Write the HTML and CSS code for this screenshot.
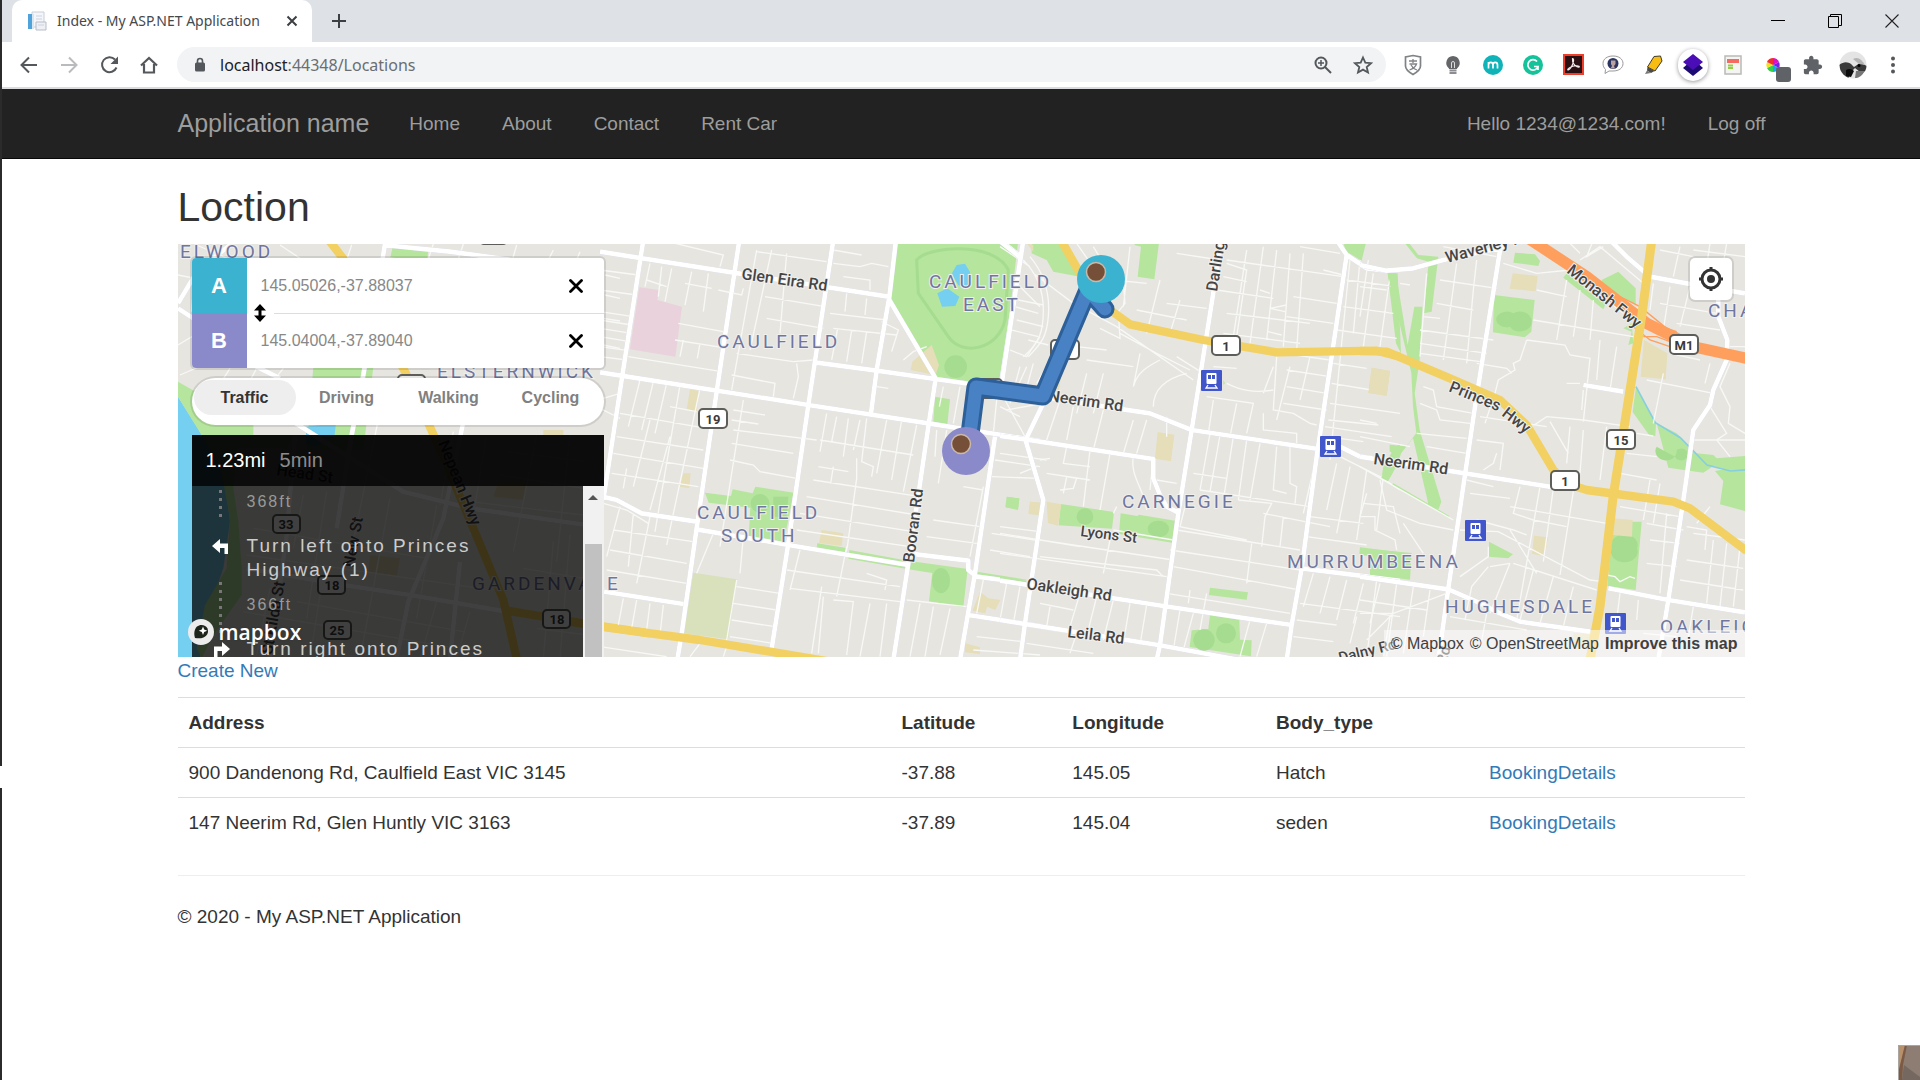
FILE: index.html
```html
<!DOCTYPE html>
<html lang="en">
<head>
<meta charset="utf-8">
<title>Index - My ASP.NET Application</title>
<link rel="stylesheet" href="styles.css">
</head>
<body>
<div class="window">
<header class="chrome">
  <div class="tabstrip">
    <div class="tab">
      <svg class="favicon" viewBox="0 0 20 20"><path d="M5 1h12v15H5z" fill="#f4f6fa" stroke="#c9ced8"/><path d="M1 3h4v15H1z" fill="#4fa3da"/><path d="M5 3h2v15H5z" fill="#d8e6f2"/><path d="M9 11h10v8H9z" fill="#eef0f4" stroke="#b7bec9"/><path d="M9 5h6M9 8h6M11 14h6" stroke="#ccd3df"/></svg>
      <span class="tab-title">Index - My ASP.NET Application</span>
      <button class="icon-btn tab-close" aria-label="Close tab"><svg width="12" height="12" viewBox="0 0 12 12"><path d="M1.500 1.500l9 9M10.500 1.500l-9 9" stroke="#3c4043" stroke-width="2"/></svg></button>
    </div>
    <button class="icon-btn new-tab" aria-label="New tab"><svg width="16" height="16" viewBox="0 0 16 16"><path d="M8 1v14M1 8h14" stroke="#3c4043" stroke-width="2"/></svg></button>
    <div class="window-buttons">
      <button class="icon-btn" aria-label="Minimise"><svg width="14" height="14" viewBox="0 0 14 14"><path d="M0 6.500h14" stroke="#000"/></svg></button>
      <button class="icon-btn" aria-label="Restore"><svg width="14" height="14" viewBox="0 0 14 14" fill="none" stroke="#000"><path d="M.5 2.500h10v11H.5zM2.500 2.500v-2h11v11h-3"/></svg></button>
      <button class="icon-btn" aria-label="Close"><svg width="14" height="14" viewBox="0 0 14 14"><path d="M.5 .5l13 13M13.500 .5l-13 13" stroke="#222" stroke-width="1.100"/></svg></button>
    </div>
  </div>
  <div class="toolbar">
    <button class="icon-btn" aria-label="Back"><svg width="18" height="18" viewBox="0 0 18 18" fill="none" stroke="#54585c" stroke-width="2"><path d="M17 9H2M9 1.500L1.500 9 9 16.500"/></svg></button>
    <button class="icon-btn" aria-label="Forward"><svg width="18" height="18" viewBox="0 0 18 18" fill="none" stroke="#b9bbbd" stroke-width="2"><path d="M1 9h15M9 1.500L16.500 9 9 16.500"/></svg></button>
    <button class="icon-btn" aria-label="Reload"><svg width="20" height="20" viewBox="0 0 20 20"><path d="M17.500 12.500A7.500 7.500 0 1 1 16 4.500" fill="none" stroke="#54585c" stroke-width="2"/><path d="M19 1.500V9h-7.500z" fill="#54585c"/></svg></button>
    <button class="icon-btn" aria-label="Home"><svg width="18" height="18" viewBox="0 0 18 18"><path d="M4 8v8.500h10V8M1 9.500L9 2l8 7.500" fill="none" stroke="#54585c" stroke-width="2.200"/></svg></button>
    <div class="omnibox">
      <svg width="12" height="16" viewBox="0 0 12 16"><rect x="1" y="5.500" width="10" height="9" rx="1.500" fill="#54585c"/><path d="M3.500 6V4a2.500 2.500 0 0 1 5 0v2" fill="none" stroke="#54585c" stroke-width="1.600"/></svg>
      <span class="url"><span class="host">localhost</span>:44348/Locations</span>
      <button class="icon-btn" aria-label="Zoom"><svg width="18" height="18" viewBox="0 0 18 18" fill="none" stroke="#54585c" stroke-width="2"><circle cx="7" cy="7" r="5.500"/><path d="M11 11l6 6"/><path d="M7 4v6M4 7h6" stroke-width="1.500"/></svg></button>
      <button class="icon-btn" aria-label="Bookmark"><svg width="20" height="20" viewBox="0 0 20 20"><path d="M10 2.500l2.300 5.200 5.700.5-4.300 3.800 1.300 5.500-5-2.900-5 2.900L6.300 12 2 8.200l5.700-.5z" fill="none" stroke="#54585c" stroke-width="1.800"/></svg></button>
    </div>
    <div class="extensions">
      <button class="icon-btn" aria-label="Shield"><svg width="20" height="22" viewBox="0 0 20 22"><path d="M10 1.500l7.500 1.500v9c0 4-4 6.500-7.500 8.500-3.500-2-7.500-4.500-7.500-8.500V3z" fill="#fff" stroke="#808386" stroke-width="1.700"/><path d="M10 5v4M6 7h8M6.500 10h7c-1 3-4 5-7 6M8 11c1 2 3 4 6 5" fill="none" stroke="#808386" stroke-width="1.300"/></svg></button>
      <button class="icon-btn" aria-label="Lamp"><svg width="16" height="20" viewBox="0 0 16 20"><path d="M8 1a7 7 0 0 1 4 12.500V14H4v-.5A7 7 0 0 1 8 1z" fill="#636568"/><path d="M6.500 13V8a1.500 1.500 0 0 1 3 0v5" fill="none" stroke="#ddd"/><path d="M4.500 15.500h7M4.500 18h7" stroke="#8b8d90" stroke-width="1.800"/></svg></button>
      <button class="icon-btn" aria-label="M"><svg width="20" height="20" viewBox="0 0 20 20"><circle cx="10" cy="10" r="10" fill="#10b3b7"/><path d="M5.500 13.500V7M5.500 10c0-3.500 4.500-3.500 4.500 0v3.500M10 10c0-3.500 4.500-3.500 4.500 0v3.500" fill="none" stroke="#fff" stroke-width="1.700"/></svg></button>
      <button class="icon-btn" aria-label="Grammar"><svg width="20" height="20" viewBox="0 0 20 20"><circle cx="10" cy="10" r="10" fill="#15c39a"/><path d="M14 6.500A5.200 5.200 0 1 0 15 11.500h-4M15 11v4" fill="none" stroke="#fff" stroke-width="1.700"/></svg></button>
      <button class="icon-btn" aria-label="PDF"><svg width="21" height="21" viewBox="0 0 21 21"><path d="M1 1h19v19H1z" fill="#2a1012" stroke="#ee3f2c" stroke-width="2"/><path d="M9.500 4.500c2 0 1 5-1.500 9-2 3-4 3-3 1.500s5-3.500 9-3.200 2 2 0 1-5-4-4.500-8.300z" fill="none" stroke="#f2e8e8" stroke-width="1.200"/></svg></button>
      <button class="icon-btn" aria-label="Chat"><svg width="22" height="20" viewBox="0 0 22 20"><path d="M11 1c6 0 10 3 10 7.500S17 16 11 16H7l-4 2.500.5-4C2 13 1 11 1 8.500 1 4 5 1 11 1z" fill="#fff" stroke="#999"/><circle cx="11" cy="8.500" r="5.500" fill="#2c3460"/><path d="M9 5.500h4.500V9L12 11l1 2.500H8.500L10 11 9 9z" fill="#b9a29f"/></svg></button>
      <button class="icon-btn" aria-label="Highlighter"><svg width="20" height="20" viewBox="0 0 20 20"><path d="M11 1.500L17.500 1l1.500 5-7 10-7.500-4z" fill="#f8bd12" stroke="#3f3a2c"/><path d="M4.500 12l7 4-3.500 2-4-2.500z" fill="#4c4a46"/><path d="M4 15.500l4 2.500-6 1z" fill="#777"/></svg></button>
      <button class="icon-btn active-ext" aria-label="Layers"><svg width="22" height="24" viewBox="0 0 22 24"><path d="M11 6l10 9-10 8L1 15z" fill="#1d0b73"/><path d="M11 1l10 8-10 8L1 9z" fill="#4b0db5"/></svg></button>
      <button class="icon-btn" aria-label="Notes"><svg width="18" height="20" viewBox="0 0 18 20"><path d="M1 1h16v18H1z" fill="#f4f4f2" stroke="#b9b9b7" stroke-width="1.500"/><path d="M3 4h12v4H3z" fill="#f56a63"/><path d="M4 10.500h5M4 13h5" stroke="#94cf3f" stroke-width="2"/></svg></button>
      <button class="icon-btn" aria-label="Colours"><svg width="36" height="36" viewBox="0 0 36 36"><path d="M18 18V11a7 7 0 0 1 6 4z" fill="#e010c0"/><path d="M18 18l6-3a7 7 0 0 1 0 6z" fill="#7a1ee8"/><path d="M18 18l6 3a7 7 0 0 1-6 4z" fill="#18a9f5"/><path d="M18 18v7a7 7 0 0 1-6-4z" fill="#35d04a"/><path d="M18 18l-6 3a7 7 0 0 1 0-6z" fill="#f4e020"/><path d="M18 18l-6-3a7 7 0 0 1 6-4z" fill="#f03030"/><rect x="21" y="20" width="15" height="15" rx="3" fill="#5f6368"/></svg></button>
      <button class="icon-btn" aria-label="Extensions"><svg width="20" height="20" viewBox="1 0 23 23"><path d="M20.500 11H19V7c0-1.100-.9-2-2-2h-4V3.500C13 2.120 11.880 1 10.500 1S8 2.120 8 3.500V5H4c-1.100 0-1.990.9-1.990 2v3.800H3.500c1.490 0 2.700 1.210 2.700 2.700s-1.210 2.700-2.700 2.700H2V20c0 1.100.9 2 2 2h3.800v-1.500c0-1.490 1.210-2.700 2.700-2.700 1.490 0 2.700 1.210 2.700 2.700V22H17c1.100 0 2-.9 2-2v-4h1.500c1.380 0 2.500-1.120 2.500-2.500S21.880 11 20.500 11z" fill="#5f6368"/></svg></button>
      <button class="icon-btn" aria-label="Profile"><svg width="28" height="28" viewBox="0 0 28 28"><defs><clipPath id="round"><circle cx="14" cy="14" r="13.500"/></clipPath></defs><g clip-path="url(#round)"><path d="M0 0h28v28H0z" fill="#e4e4e4"/><path d="M0 14c5-4 9-3 12-1l3 3 6-4 7 3v5l-7 1-5-4-4 4-3 7-7-3z" fill="#3a3a3a"/><path d="M7 19c3-2 6-1 8 1l-3 6-5-1z" fill="#0c0c0c"/><path d="M14 8c5-3 9 1 12 6l-6-1z" fill="#b4b4b4"/><path d="M17 20l9 0-5 7-5 0z" fill="#777"/><circle cx="20" cy="14.500" r="1.500" fill="#000"/></g></svg></button>
      <button class="icon-btn" aria-label="Menu"><svg width="4" height="18" viewBox="0 0 4 18" fill="#54585c"><circle cx="2" cy="2.500" r="2"/><circle cx="2" cy="9" r="2"/><circle cx="2" cy="15.500" r="2"/></svg></button>
    </div>
  </div>
</header>

<nav class="navbar">
  <div class="container navbar-inner">
    <a class="brand" href="#">Application name</a>
    <a class="nav-link" href="#">Home</a>
    <a class="nav-link" href="#">About</a>
    <a class="nav-link" href="#">Contact</a>
    <a class="nav-link" href="#">Rent Car</a>
    <a class="nav-link nav-right" href="#">Hello 1234@1234.com!</a>
    <a class="nav-link" href="#">Log off</a>
  </div>
</nav>

<main class="container">
  <h2>Loction</h2>
  <section class="map" aria-label="Map">
    <svg class="map-canvas" viewBox="178 244 1567 413" preserveAspectRatio="xMidYMid slice">
      <rect x="178" y="244" width="1567" height="413" fill="#e6e5e0"/>

      <!-- Elwood, Gardenvale -->
      <g transform="translate(170 235) scale(.33333)">
        <path fill="#75cff0" d="M0 480L24 485 90 590 160 700 180 860 160 1000 100 1170 90 1270H0z"/>
        <path fill="#b6e59e" d="M24 440L130 500 250 570 250 600H370L350 640 200 640 190 760 205 860 215 1000 215 1080 130 1200 95 1270 80 1240 105 1110 170 1000 180 850 150 690 24 485zM670 27l105 15-4 40-110-15zM430 395h180l-30 250H410z"/>
        <path fill="#75cff0" d="M408 575l90-10-5 40-60 30-25-10z"/>
        <path fill="#e3dcb5" d="M985 740h90l-15 55-90-10zM600 960l90 10-10 55-85-10zM1120 585h60v20h-60z"/>
        <g class="minor"><path d="M24 120l50 10-10 100M80 30l250 110M330 30l90 60M545 30l-20 60M790 27l-20 60M880 27l-20 60M1040 30l-20 70M1150 45l-30 60M1230 50l-20 50M24 330l100-60M30 420l140-60M180 400l-70 110M260 400l-60 110M340 400l-80 100M1305 120l45 10M1305 180l45 10M1300 250l50 8M1300 330l50 10M1300 490l50 -15M1290 520l60 30M640 480l-90 440M850 590l-40 220M950 600l-50 300M1100 600l-70 350M1200 600l-40 380M1010 650l240 30M990 720l250 40M900 800l340 40M400 780l-30 160M470 770l-60 380M660 790l-80 430M800 810l-60 340M250 880l520 90M230 960l700 100M220 1130l640 110M380 1100l500 90M300 1060l-40 200M450 1080l-30 190M600 1110l-30 160M800 1100l-50 170M900 1130l-40 140M1060 1000l180 30M1100 1180l150 20M1150 920l-30 350M1200 900l-30 370"/></g>
        <g class="major"><path d="M645 27L580 420 545 600 500 880M375 600L350 900 300 1270M880 560L820 850 715 1100 680 1270M24 220L70 250 130 330 330 430M24 205l60-100 100-78M370 560L700 770 900 820 1250 870M230 1000L520 1050 720 1080 1010 1130M640 30l200 20 450 60M870 980l-30 290"/></g>
        <path class="yellow" d="M480 20l70 90 160 310 110 245 180 430 40 175M1000 1125l240 40 200 30"/>
      </g>

      <!-- Caulfield -->
      <g transform="translate(600 240) scale(.33333)">
        <path fill="#b6e59e" d="M893 0H1255L1205 420 1115 425 1007 410 870 170zM1005 470l45 8-8 75-42-8zM315 758l78 10 5-20 60 12 8-20 115 18-30 150-105-15 5-90-125-15zM652 910l92 15-2 14-92-14zM748 930l175 32 180 25-13 115-103-18 10-85-62-10-190-33zM1220 770l38 6-4 32-38-6zM1130 995l150 24-5 6-150-20z"/>
        <path fill="none" stroke="#a6dc8f" stroke-width="9" d="M950 60C980 20 1180 0 1225 90l-10 150c-20 90-130 110-170 50l-90-130z"/>
        <circle cx="1067" cy="380" r="34" fill="#a6dc8f"/><circle cx="480" cy="790" r="28" fill="#a6dc8f"/><ellipse cx="1023" cy="1022" rx="27" ry="38" fill="#a6dc8f"/><path d="M520 770h45l-5 60h-40z" fill="#a6dc8f"/>
        <path fill="#75cff0" d="M1070 75l25-4 15 25-5 45-30-5-20-35zM1012 160l30-15 36 25-12 28-40 2z"/>
        <path fill="#e9d2dc" d="M118 142l58 8-4 30 74 20-20 150-136-22z"/>
        <path fill="#d8e0bc" d="M280 998l130 20-26 180-132-18z"/>
        <path fill="#e5deb8" d="M270 448l28 5-8 62-30-5zM665 870l65 10-5 38-68-9zM250 700l22 0-4 45-28-5zM995 315l22 60-10 30-75-15 5-25zM1140 1055l25 20 36 5-15 30-25-10-5 20-38-8zM1290 785l30 3v38l-34-4zM1095 1210l45 12v20l-45-5z"/>
        <g class="minor"><path d="M0 90l115 15M0 150l110 15M0 215l100 15M0 240l95 15M0 265l95 15M0 290l90 15M0 320l85 12M0 350l80 10M150 70l-15 70M185 80l-10 90M215 85l-20 100M275 95l-20 100M325 100l-15 115M140 120l60 20M255 130l80 15M355 150l70 15 5-20M225 10l145 35-10 35M470 30l-75 420M515 30l-65 300M560 40l-20 240M470 35l210 30M495 170l180 30M500 235l170 30M235 250l135 25M225 300l140 22M85 350l280 45M250 300l-10 50M300 310l-8 45M410 340l170 25 60-5M590 370l5 40-15 65M395 405l130 25-5 40M700 30l85 15M700 70l80 10 35-10 50 10M730 110l80 10v30M740 160l-5 55M690 220l170 20M800 175l-5 50M700 265l190 20M713 265l-18 95M755 270l-15 95M800 275l-15 95M845 245l50 25-20 65M910 360l30-25 40-15M120 420l-35 140M160 425l-35 145M200 430l-35 150M240 435l-75 440M300 445l-100 470M430 480l-70 440M210 500l80 15M400 510l95 15M395 540l80 12M400 570l250 30M60 520l260 45M50 590l260 40M40 640l270 45M35 700l260 40M395 610l185 30M390 660l70 15 20 20 110 20M80 685l-10 60M150 540l-50 200M210 590l-60 220M680 520l-20 115M710 530l-15 75M745 535l-15 115M780 540l-20 90M800 535l-15 130 35 15-5 30M860 540l-30 160M660 600l280 45M655 680l90 15M700 680l-8 50M770 655l0 60-30 220M640 720l320 50M620 770l330 55M600 820l340 55M590 870l340 50M905 540l-30 180M950 555l-40 200M830 440l35 5M1080 440l-20 110M1030 440l-12 60M1010 570l-5 80M1040 570l-25 160M1090 740l60 10M1000 840l140 20M980 890l150 20M1090 640l-20 60M1150 740l-40 210M1185 660l135 20M1175 710l140 5M1175 880l130 20M1170 930l120 20M1195 430l-15 150M1215 480l60 110M1250 130l70 70M1245 200l70 20M1235 270l80 20M1230 330l50 20 40-60M1280 380l-45 100M10 790l70 20 65 40M60 800l-40 150M100 820l-15 160M150 830l-40 200M40 870l240 35M30 930l230 40M20 990l240 40M340 880l-50 120M430 890l-10 110M410 1020l-30 180M410 1040l130 20M400 1090l130 20M395 1140l130 20M390 1190l130 20M560 990l340 50M570 1045l330 40M665 1040l-30 200M670 1070l-15 170M740 920l-30 150M600 930l-30 120M700 1080l60 5-20 160M810 1090l-30 160M860 1090l-20 160M800 1000l60 20-5 30M920 1080l180 20M960 1090l-30 160M1000 1100l-25 150M1050 1105l-30 140M1150 1020l-20 100M1220 1030l-20 110M1260 1040l-20 110M70 1075l-15 80M110 1080l-15 85M190 1095l-10 90M150 1090l-10 80M0 1220l200 30M300 1210l-30 40M380 1220l-10 30M1130 1190l140 15M1120 1230l200 15"/></g>
        <g class="major">
          <path d="M130 0L68 400 10 780M418 0L350 455 292 850 245 1180 232 1260M700 0L625 495 565 910 515 1225M888 0L868 170 830 390 813 520M868 180L1007 415 985 560 925 970 880 1260M1200 0L1262 50M1270 0L1205 420M1185 590L1125 1000 1080 1260M0 35L400 98 865 170M650 368L830 392 1110 432M0 397L250 436 625 495 985 550 1320 603M10 770L50 780 125 820 290 845M290 868L565 915 925 975M925 940L1105 962V990L1130 1010 1320 1035M0 1053L250 1092M1105 1125L1320 1158"/>
        </g>
        <path class="yellow" d="M-120 1140L0 1160 300 1200 690 1265"/>
      </g>

      <!-- Carnegie -->
      <g transform="translate(1000 240) scale(.33333)">
        <path fill="#b6e59e" d="M95 0H180L240 110 160 95 140 60 95 40zM410 0h68l-15 118-50-8 10-90-20-5zM1030 0h70l-15 62-50-30zM1163 100h30l10 240-15-30zM22 770l36 5-4 35-36-8zM182 792l160 24-6 50-160-10zM362 820l50 8 5-4 108 18-8 66-160-26zM630 1043l114 14-4 22-113-14zM630 1125l88 14 2 60 35 2-2 48-184-28 6-50 50-4zM1080 922l120 15v75l-90-15 2-50-34-6zM1150 680l30-50 20-20v40l-28 60-26-6zM670 420l5 10-5 5zM0 1008l80 14v6l-80-12z"/>
        <circle cx="255" cy="830" r="25" fill="#a6dc8f"/><ellipse cx="475" cy="867" rx="32" ry="25" fill="#a6dc8f"/><circle cx="612" cy="1200" r="32" fill="#a6dc8f"/><circle cx="678" cy="1180" r="30" fill="#a6dc8f"/>
        <path fill="#e5deb8" d="M473 576l50 8-10 80-48-8zM90 785l38 3-5 38-38-6zM140 785l44 8-10 64-30-8zM1115 383l55 10-10 74-55-8zM150 440l35-40-10 60zM80 10l20 5v20z"/>
        <g class="minor"><path d="M0 20l90 60M70 60c40 40 60 90 60 150s-10 100-60 140M90 50c50 60 60 120 55 180s-20 80-60 120M55 180l75 15M50 240l80 20M85 300l60 15M100 100l120 90 130 70 230 160M230 10l90 130M280 20l60 100 30 10 5 60-20 25 5 80-60-30M340 120l100 10M390 20l-20 180M530 40l130 20M680 70l60 20-30 200M740 30l-40 260M790 20l-40 290M830 30l-30 270M870 40l-20 280M910 40l-20 290M680 60l350 50M670 110l70 15M500 190l120 15M480 120l-40 160M410 210l150 30M540 180l-30 100M650 150l170 25M780 150l30 10M860 195l-50 10 45 10M680 220l250 30M805 275l40 10M670 280l230 30M900 20l120 20M970 90l60 15M880 170l130 20M860 230l140 20M850 340l140 20M1050 60l-60 600M1080 60l-20 220M1120 100l-30 220M1170 110l-30 210M1040 120l150 20M1030 200l150 20M1010 270l180 25M1000 370l100 15M995 430l120 20M990 490l210 30M985 540l150 15M980 590l110 15M975 560l200 30M60 380l-30 110M100 370l-30 110M140 380l-30 50M260 400l-30 120M310 400l-30 120M230 320l90 10M260 360l140 20M400 440l20-100M360 280l110 60 100 50M400 440c10-40 40-60 80-80M460 500c0-40 20-80 100-100M530 350l80 50M640 380l70 5M680 430c40 20 80 30 140 20M620 470l140 20-20 90M640 480l-15 100M710 490l-20 100M820 380l-30 80M830 350l-10 160 60 10 50 30 20 5M870 380l-40 160M930 350l-30 130M860 390l130 20M860 440l120 20M850 490l130 20M790 520l0 50 100 10v30M180 480l-40 120M220 500l-20 100M310 510l-30 120M400 540l-30 100M440 540l-30 100M500 530l0 60M0 500l60 30M20 510l110-20M0 640l140 20M120 660l30 -5M60 700l50-20M200 620l-10 50 80 10M190 760l10-50 30 5-10 30-40 5M270 630l-20 170M330 640l-30 170M400 650c-10 60 30 90 40 160M140 700l130 20M460 650l-10 100M470 720l60 10M630 580l-30 170M660 585l-30 170M700 590l-30 190M740 600l-25 180M780 610l-30 170M830 620l-10 130 40 10M870 610l0 120 20 10-5 50M600 750l330 50M580 700l100 15M715 780l100 10-20 40-10 90M560 780l-20 80 200 40M530 870l370 60M510 930l390 60M520 980l380 70M850 830l-10 90M790 820l200 40M755 910l-15 120M940 690l-30 130M1010 670l-30 140M1050 680l-40 200M1100 690l-30 210M1150 710l-20 160M930 830l160 20M920 890l180 25M1020 650l120 60 60 40M1090 790l90 10 20 80M0 880l240 40M0 940l500 70M0 860l120 15M340 820l10-20M330 900l-20 100M340 870l180 30M120 950l350 40 20 20M120 900l400 60M570 1050l-5 40M620 1060l-20 110M540 1110l-20 120M580 1120l-30 110M240 1060l-30 100M290 1070l-30 120M340 1080l-30 120M390 1090l-20 120M440 1095l-20 120M120 1090l100 20M150 1100l-10 60M90 1160l130 20M80 1210l200 30M230 1180l-20 60M750 1140l-30 110M800 1150l-30 100M500 1060l370 60M900 1090l300 40M940 1000l-30 100M990 1010l-30 110M1040 1020l-30 120M1090 1030l-30 120M1140 1030l-30 120M890 1140l120 15M880 1190l120 15M1170 1130l-20 120M1070 1130l-20 80"/></g>
        <g class="major">
          <path d="M-5 0L65 55M70 0L5 430M75 595L130 780 75 1150 60 1260M0 588L75 598 460 657V715L480 765 500 800 535 818M150 475L250 490 450 520 575 570 955 627M1020 620L1080 650 1200 665M665 0L575 570 535 820 480 1215 470 1260M1040 45L995 350 950 650 905 985 875 1155 860 1260M1010 0L1040 45 1100 85 1160 92 1200 90M130 490L78 598M0 1022L490 1098 875 1155M0 1140L475 1215 720 1260M905 985L1200 1022"/>
        </g>
        <path class="yellow" d="M180 -5L240 100 310 195 390 253 610 300 830 337 1130 332 1200 350"/>
      </g>

      <!-- Murrumbeena, Hughesdale, Oakleigh -->
      <g transform="translate(1360 240) scale(.33333)">
        <path fill="#b6e59e" d="M83 100h25l35 215 20-115h24l-8 160-15 100 15 110 65 215-8 22-30-8-5-25-42-180-35 45-15 40-25 45-20-10 20-50 25-15-20-15v-20l50 5 30-40-10-80-5-100zM140 0l35 45 60 5-20 165-24 5 15-155-35-10-40-50zM0 0h15l-15 50zM465 38l60 5 15 20-5 15-75-10zM402 165l122 15-10 95-20 17-95-15zM620 100l118 90-8 18-120-95zM725 120l50-25 52 50v50l-100-60zM815 250l-25 15 25 10-10 40 15-5zM828 440l60 110-2 38-18-2-50-70zM890 550l60 30 60 60 50 5 10 10 85-7v165l-75-20 10-70-25-30 30-5-35-10-30 20-105-15zM387 905l72 38-15 12-57-5zM0 925l155 14-5 80-120-15v-55l-30-5zM760 845l85 0-18 205-85-12zM100 730l168 98-4 4-168-98z"/>
        <path fill="#a6dc8f" d="M410 230a35 30 0 0 1 50-10 35 30 0 1 1-10 40 30 25 0 0 1-40-30zM890 620a32 28 0 1 0 60 10 20 18 0 1 1-5 20zM755 925a40 32 0 1 1 76 0 40 32 0 1 1-76 0z"/>
        <path fill="none" stroke="#87cfe0" stroke-width="5" d="M828 440l58 108 75 45 80 82 70 18 50-4"/>
        <path fill="#e5deb8" d="M458 100l75 8-6 46-78-8zM35 383l55 10-10 74-55-8zM522 887l42 5-10 57-38-8zM852 300l70 40-5 78-75-8zM760 835l58 5-2 50-60-5zM640 1180h60v40h-60z"/>
        <g class="minor"><path d="M0 140l80 10M25 60L0 230M120 130l30 5M190 230l50 5M200 100l-20 250M290 70l-40 290M350 60l-10 90-20 220M250 20l160 30M240 120l170 25M230 190l110 20M180 270l220 30M180 310l200 30M180 340l180 25M430 70l100 30 100-10 160 130M530 150l90 20M620 120l-30 180M660 150l-20 140M700 180l-10 120M520 240l300 50M500 300l115 15 15 30 60 10-20 190M500 300l-20 60-20 10 5 20-50 30-10 40-30 90M350 370l90 15 15 15M770 320l-20 130M720 300l-10 120M660 430l-40 0M670 450l-5 60M500 570l60-40 110 10M670 540l140 20M570 545l55 95M630 560l-10 110M670 570l-10 130M740 560l-20 160M190 440l30 10 10 50 110 20M180 490l50 20 10 30 90 10M0 540l50 10M0 590l150 30M170 580l150 15M200 620l120 20M350 600l80 10-10 80M370 690l30-20 10-30M360 530l200 30M320 720l80 20M330 760l120 15M480 740l-20 80 60 20 100 20M540 740l-70 400M640 755l-40 250M580 745l-30 220M450 800l290 50M350 840l110 30 40 15M300 870l115 5 275 145 40 5M0 680l280 160M60 720l20 90 100 40 100 20M20 760l-20 70M0 830l45 0 0 40 60 30 5 30M130 850l60 90M385 920l0 30 -85 60M385 980l-50 60 -20 100M450 870l80 130M390 980l60-10M460 970l250 80M450 970l-60 150M520 990l-40 150M580 1010l-40 140M640 1040l-30 120M0 1120l100 0 160-60M100 1120l-80 80M50 1020l-30 230M110 1030l-30 220M160 1040l-30 200M210 1050l-20 140M0 1080l200 30M270 1130l230 40M380 1120l-20 110M780 700l110 20M800 640l90 10M830 580l50 8M870 720l-20 120M900 730l-20 120M780 800l180 30M860 850l110 20M870 900l90 10M860 970l90 10M920 820l-20 240M740 1005l25 5 15 15 30-15 15 5M835 1080l-5 60M780 1060l-15 120M980 860l60 10-5 60M1000 880l155 20M980 960l170 25M960 1020l190 30M1050 800l-40 50M1060 900l-20 190M1100 910l-20 190M1140 920l-20 180M930 340l90 20M910 400l-30 150M860 420l200 40M880 130l-10 80M930 140l-20 130M990 140l-30 120M900 190l170 30M950 250l130 20M1100 320l55 0M1050 370l-15 60M1110 370l-30 70 30 60-5 50 50 30M1050 500l50 80-30 20 40 50M1000 600l155 0M700 0l-20 50 50-30M660 60l60-40 130 110M620 0l40 40M1000 30l155 20M1100 10l-20 120M1050 10l-15 100M900 30l100 20M960 20l-20 90M850 1180l100 10M1000 1100l-20 120"/></g>
        <g class="major">
          <path d="M0 75L80 92 160 85 250 60 440 20M425 0L345 500 265 1045 235 1260M0 650L315 700 600 745M0 1010L265 1048 350 1085 420 1120 480 1145 690 1175M745 1045L925 1080 1155 1117M750 0L800 50 870 110 980 130 1155 160M1075 180V230L1102 300 1100 360 1060 450 1050 495 1000 570 970 780 925 1080 895 1260M670 435L790 455"/>
        </g>
        <path fill="none" stroke="#ff9f5e" stroke-width="4" d="M780 170l60 30 80 65 30 10M820 260l50 40 60 20M850 290l40 0 80 30 60 20"/>
        <path class="orange" d="M505 -5L680 110 860 250 1000 320 1160 355"/>
        <path class="yellow" d="M0 333L80 335 270 415 420 480 500 555 580 690Q620 735 680 750L940 785 990 805 1160 933"/>
        <path class="yellow wide" d="M876 -5L845 230 760 765 720 1100 690 1260"/>
      </g>

      <g class="shield">
        <rect x="699" y="409" width="28" height="19" rx="4"/><text x="713" y="424">19</text>
        <rect x="1212" y="336" width="28" height="19" rx="4"/><text x="1226" y="351">1</text>
        <rect x="1051" y="340" width="28" height="19" rx="4"/>
        <rect x="972" y="379" width="30" height="19" rx="4"/>
        <rect x="1670" y="335" width="28" height="19" rx="4"/><text x="1684" y="350">M1</text>
        <rect x="1607" y="430" width="28" height="19" rx="4"/><text x="1621" y="445">15</text>
        <rect x="1551" y="471" width="28" height="19" rx="4"/><text x="1565" y="486">1</text>
        <rect x="273" y="515" width="27" height="18" rx="4"/><text x="286" y="529">33</text>
        <rect x="318" y="576" width="27" height="18" rx="4"/><text x="332" y="590">18</text>
        <rect x="324" y="621" width="27" height="18" rx="4"/><text x="337" y="635">25</text>
        <rect x="543" y="610" width="27" height="18" rx="4"/><text x="557" y="624">18</text>
        <rect x="480" y="226" width="27" height="18" rx="4"/><rect x="398" y="375" width="27" height="18" rx="4"/>
      </g>

      <defs><g id="station"><rect width="21" height="21" rx="1" fill="#4256cc"/><rect x="5.500" y="3" width="10" height="11" rx="1" fill="#fff"/><path d="M7 5h3v4H7zM11 5h3v4h-3z" fill="#4256cc"/><path d="M7 15l-2 3h11l-2-3" fill="none" stroke="#fff" stroke-width="1.300"/></g></defs>
      <use href="#station" x="1201" y="370"/><use href="#station" x="1320" y="436"/><use href="#station" x="1465" y="520"/><use href="#station" x="1605" y="613"/>

      <g class="place">
        <text x="180" y="258">ELWOOD</text>
        <text x="437" y="378">ELSTERNWICK</text>
        <text x="472" y="590">GARDENVALE</text>
        <text x="717" y="348">CAULFIELD</text>
        <text x="697" y="519">CAULFIELD</text>
        <text x="721" y="542">SOUTH</text>
        <text x="929" y="288">CAULFIELD</text>
        <text x="963" y="311">EAST</text>
        <text x="1122" y="508">CARNEGIE</text>
        <text x="1287" y="568">MURRUMBEENA</text>
        <text x="1445" y="613">HUGHESDALE</text>
        <text x="1660" y="633">OAKLEIGH</text>
        <text x="1708" y="317">CHADSTONE</text>
      </g>
      <g class="street">
        <text transform="translate(741 279) rotate(8)">Glen Eira Rd</text>
        <text transform="translate(1048 401) rotate(8)">Neerim Rd</text>
        <text transform="translate(1373 464) rotate(8)">Neerim Rd</text>
        <text transform="translate(1026 589) rotate(8)">Oakleigh Rd</text>
        <text transform="translate(1067 637) rotate(7)">Leila Rd</text>
        <text class="small" transform="translate(1080 536) rotate(7)">Lyons St</text>
        <text transform="translate(914 563) rotate(-83)">Booran Rd</text>
        <text transform="translate(1217 292) rotate(-81)">Darling Rd</text>
        <text transform="translate(1447 263) rotate(-15)">Waverley Rd</text>
        <text transform="translate(1566 272) rotate(39)">Monash Fwy</text>
        <text transform="translate(1448 391) rotate(22)">Princes</text>
        <text transform="translate(1501 415) rotate(38)">Hwy</text>
        <text class="small" transform="translate(1340 663) rotate(-14)">Dalny Rd</text>
        <text transform="translate(276 475) rotate(8)">Head St</text>
        <text transform="translate(438 443) rotate(68)">Nepean Hwy</text>
        <text transform="translate(354 568) rotate(-80)">New St</text>
        <text transform="translate(272 655) rotate(-80)">St Kilda St</text>
        <text class="small" transform="translate(1446 665) rotate(-75)">Rd</text>
      </g>

      <g fill="none" stroke-linejoin="round" stroke-linecap="round">
        <path d="M1105 309L1088 290 1043 396 976 387 968 450" stroke="#2d5f99" stroke-width="19"/>
        <path d="M1105 309L1088 290 1043 396 976 387 968 450" stroke="#4882c5" stroke-width="13"/>
      </g>
      <circle cx="1101" cy="279" r="24" fill="#3bb2d0"/><circle cx="966" cy="451" r="24" fill="#8a8acb"/>
      <g fill="#754f37" stroke="#cbb8a6" stroke-width="1.500"><circle cx="1096" cy="272" r="9.500"/><circle cx="961" cy="444" r="9.500"/></g>
    </svg>

    <div class="directions">
      <form class="inputs">
        <div class="waypoint">
          <label class="badge badge-a" for="origin">A</label>
          <input id="origin" value="145.05026,-37.88037">
          <button type="button" class="icon-btn" aria-label="Clear origin"><svg width="14" height="14" viewBox="0 0 14 14"><path d="M1.500 1.500l11 11M12.500 1.500l-11 11" stroke="#000" stroke-width="2.800" stroke-linecap="round"/></svg></button>
        </div>
        <div class="waypoint">
          <label class="badge badge-b" for="destination">B</label>
          <input id="destination" value="145.04004,-37.89040">
          <button type="button" class="icon-btn" aria-label="Clear destination"><svg width="14" height="14" viewBox="0 0 14 14"><path d="M1.500 1.500l11 11M12.500 1.500l-11 11" stroke="#000" stroke-width="2.800" stroke-linecap="round"/></svg></button>
        </div>
        <button type="button" class="icon-btn swap" aria-label="Swap"><svg width="12" height="18" viewBox="0 0 12 18"><path d="M6 0l6 6.500H7.500v5H12L6 18 0 11.500h4.500v-5H0z"/></svg></button>
      </form>
      <div class="profiles">
        <button class="profile selected">Traffic</button>
        <button class="profile">Driving</button>
        <button class="profile">Walking</button>
        <button class="profile">Cycling</button>
      </div>
      <div class="itinerary">
        <div class="summary"><strong>1.23mi</strong><span>5min</span></div>
        <div class="steps-wrap">
          <div class="steps">
            <div class="step"><i class="dots"></i><span class="dist">368ft</span></div>
            <div class="step maneuver"><svg width="18" height="18" viewBox="0 0 18 18"><path d="M0 8l8-7v4.500h8V16h-3.500v-6H8V15z" fill="#fff"/></svg><span>Turn left onto Princes Highway (1)</span></div>
            <div class="step second"><i class="dots"></i><span class="dist">366ft</span></div>
            <div class="step maneuver"><svg width="18" height="18" viewBox="0 0 18 18"><path d="M18 8l-8-7v4.500H2V16h3.500v-6H10V15z" fill="#fff"/></svg><span>Turn right onto Princes Highway</span></div>
          </div>
          <div class="scrollbar"><i class="arrow"></i><i class="thumb"></i></div>
        </div>
      </div>
    </div>
    <button class="locate" aria-label="Find my location"><svg width="26" height="26" viewBox="0 0 26 26"><circle cx="13" cy="13" r="9" fill="none" stroke="#333" stroke-width="3"/><circle cx="13" cy="13" r="4" fill="#333"/><path d="M13 1v4M13 21v4M1 13h4M21 13h4" stroke="#333" stroke-width="3"/></svg></button>
    <a class="logo" href="#"><svg width="26" height="26" viewBox="0 0 26 26"><circle cx="13" cy="13" r="13" fill="#ececec"/><path d="M7 19c-1.500-5-.5-9 2-11.500 3.500-3 9-1.500 10.500 2 1.500 4-.5 7.500-4 9-2.500 1-5.500 1-8.500.5z" fill="#1d2419"/><path d="M15 7.500l1.200 3 3 1.200-3 1.200-1.200 3-1.200-3-3-1.200 3-1.200z" fill="#fff"/></svg><span>mapbox</span></a>
    <div class="attribution"><a href="#">© Mapbox</a> <a href="#">© OpenStreetMap</a> <a class="improve" href="#">Improve this map</a></div>
  </section>

  <p class="create"><a href="#">Create New</a></p>
  <table class="table">
    <colgroup><col class="c-address"><col class="c-lat"><col class="c-long"><col class="c-body"><col></colgroup>
    <tr><th>Address</th><th>Latitude</th><th>Longitude</th><th>Body_type</th><th></th></tr>
    <tr><td>900 Dandenong Rd, Caulfield East VIC 3145</td><td>-37.88</td><td>145.05</td><td>Hatch</td><td><a href="#">BookingDetails</a></td></tr>
    <tr><td>147 Neerim Rd, Glen Huntly VIC 3163</td><td>-37.89</td><td>145.04</td><td>seden</td><td><a href="#">BookingDetails</a></td></tr>
  </table>
  <hr>
  <footer>© 2020 - My ASP.NET Application</footer>
</main>
<svg class="webcam" viewBox="0 0 22 35" preserveAspectRatio="none"><path d="M0 0h22v35H0z" fill="#8d7d72"/><path d="M0 0h7L2 22v13H0z" fill="#b9906c"/><path d="M7 0L1 24v11h3L5 20 9 0z" fill="#7b5b46"/><path d="M6 20l16 12v3H4z" fill="#756860"/><path d="M.5 35V.5H22" fill="none" stroke="#aaa69f"/></svg>
</div>
</body>
</html>
```
FILE: styles.css
```css
* { box-sizing: border-box; }
body {
  margin: 0;
  font: 19px/27px "Liberation Sans", Arial, sans-serif;
  color: #333;
  background: #fff;
}
.window {
  min-height: 100vh;
  padding-left: 2px;
  background: linear-gradient(#2b2b2b 766px, #fff 766px, #fff 788px, #2b2b2b 788px) left / 2px 100% no-repeat;
}
a { color: #337ab7; text-decoration: none; }
button { font: inherit; border: 0; padding: 0; background: none; }
.icon-btn { display: flex; align-items: center; justify-content: center; width: 40px; height: 35px; flex: none; }

/* Browser frame */
.tabstrip { display: flex; align-items: center; height: 42px; background: #dee1e6; }
.tab {
  display: flex; align-items: center; align-self: stretch;
  width: 300px; margin-left: 10px; padding: 0 0 0 15px;
  background: #fff; border-radius: 10px 10px 0 0;
}
.favicon { width: 20px; height: 20px; margin-right: 10px; }
.tab-title { flex: 1; white-space: nowrap; font: 14px/20px "Noto Sans", sans-serif; color: #45494d; }
.tab-close { width: 40px; }
.new-tab { width: 54px; }
.window-buttons { display: flex; margin-left: auto; }
.window-buttons .icon-btn { width: 57px; }
.toolbar { display: flex; align-items: center; height: 47px; padding: 0 7px; border-bottom: 2px solid #dadce0; background: #fff; }
.omnibox {
  flex: 1; display: flex; align-items: center; height: 35px;
  margin: 0 7px 0 8px; padding: 0 3px 0 17px;
  background: #f1f3f4; border-radius: 18px;
}
.url { flex: 1; margin-left: 14px; font: 16px/24px "Noto Sans", sans-serif; color: #6a6e72; }
.host { color: #202124; }
.extensions { display: flex; }
.active-ext svg { padding: 4px; width: 30px; height: 32px; border-radius: 15px; box-shadow: 0 1px 4px #999; }

/* Site navigation */
.container { max-width: 1609px; margin: 0 auto; padding: 0 21px; }
.navbar { background: #222; border-bottom: 1px solid #080808; }
.navbar-inner { display: flex; align-items: center; height: 69px; padding-right: 0; }
.navbar a { color: #9d9d9d; }
.brand { font-size: 25px; margin-right: 19px; }
.nav-link { padding: 0 21px; }
.nav-right { margin-left: auto; }
.nav-right + .nav-link { margin-right: -21px; }

h2 { margin: 26px 0 14px; font-size: 41px; line-height: 45px; font-weight: 400; }

/* Map */
.map { position: relative; height: 413px; overflow: hidden; }
.map-canvas { display: block; width: 100%; height: 100%; }
.minor path { fill: none; stroke: #f8f8f6; stroke-width: 4; }
.major path { fill: none; stroke: #fff; stroke-width: 14; stroke-linejoin: round; filter: drop-shadow(0 0 2px #c9cbe6); }
.yellow { fill: none; stroke: #f2d061; stroke-width: 25; stroke-linejoin: round; }
.yellow.wide { stroke-width: 27; }
.orange { fill: none; stroke: #ff9f5e; stroke-width: 34; }
.shield rect { fill: #fff; stroke: #5d5d5a; stroke-width: 2; }
.shield text { font: 700 13px Roboto, sans-serif; fill: #3a3a3a; text-anchor: middle; }
.place text { font: 19px Roboto, sans-serif; letter-spacing: 3px; fill: #6f769f; stroke: #f1f0ee; stroke-width: 2; paint-order: stroke; }
.street text { font: 500 16px Roboto, sans-serif; fill: #444; stroke: #f1f0ee; stroke-width: 2; paint-order: stroke; }
.street .small { font-size: 15px; }

.directions { position: absolute; left: 14px; top: 14px; width: 412px; }
.inputs { position: relative; border-radius: 4px; overflow: hidden; background: #fff; box-shadow: 0 0 0 2px rgba(0,0,0,.1); }
.waypoint { display: flex; align-items: center; height: 55px; }
.waypoint + .waypoint { background: linear-gradient(#ddd, #ddd) 82px 0 / 100% 1px no-repeat; }
.badge { width: 55px; line-height: 55px; text-align: center; font-weight: 700; font-size: 22px; color: #fff; }
.badge-a { background: #3bb2d0; }
.badge-b { background: #8a8acb; }
.waypoint input { flex: 1; min-width: 0; border: 0; padding: 0 14px; background: none; font: 16px/24px "Liberation Sans", Arial, sans-serif; color: #888; }
.waypoint .icon-btn { width: 55px; }
.swap { position: absolute; left: 58px; top: 46px; width: 20px; height: 18px; }
.profiles { display: flex; margin-top: 10px; height: 47px; padding: 2px; border-radius: 24px; background: #fff; box-shadow: 0 0 0 2px rgba(0,0,0,.1); }
.profile { flex: 1; height: 35px; border-radius: 18px; font-size: 16px; font-weight: 700; color: #808080; }
.selected { background: #eee; color: #333; }
.itinerary { margin-top: 10px; }
.summary { display: flex; gap: 14px; height: 51px; padding: 0 14px; align-items: center; background: rgba(0,0,0,.95); font-size: 20px; color: #8c8c8c; }
.summary strong { font-weight: 400; color: #fff; }
.steps-wrap { display: flex; height: 172px; overflow: hidden; }
.steps { flex: 1; padding-top: 4px; background: rgba(0,0,0,.75); font-size: 19px; line-height: 24px; letter-spacing: 2px; color: #ccc; }
.step { display: grid; grid-template-columns: 55px 270px; height: 44px; }
.second { height: 55px; padding-top: 11px; }
.dots { width: 3px; height: 30px; margin-left: 27px; background: repeating-linear-gradient(#777 0 3px, transparent 3px 8px); }
.second .dots { height: 55px; margin-top: -11px; }
.dist { font-size: 16px; color: #999; }
.maneuver { height: 48px; }
.maneuver svg { margin: 4px 0 0 20px; }
.scrollbar { width: 21px; background: #f1f1f1; padding: 9px 2px 0; }
.arrow { display: block; margin: 0 auto 44px; width: 10px; height: 5px; background: #555; clip-path: polygon(0 100%, 50% 0, 100% 100%); }
.thumb { display: block; height: 120px; background: #c1c1c1; }
.locate { position: absolute; right: 13px; top: 14px; display: flex; align-items: center; justify-content: center; width: 42px; height: 42px; background: #fff; border-radius: 5px; box-shadow: 0 0 0 2px rgba(0,0,0,.1); }
.logo { position: absolute; left: 10px; bottom: 12px; display: flex; align-items: center; gap: 5px; font: 600 21px/26px "Open Sans", sans-serif; color: #fff; text-shadow: 0 0 2px #333; }
.attribution { position: absolute; right: 0; bottom: 0; display: flex; gap: 6px; padding: 0 7px; background: rgba(255,255,255,.5); font-size: 16px; line-height: 27px; }
.attribution a { color: #404040; }
.attribution .improve { font-weight: 700; }

/* Listing */
.create { margin: 0 0 13px; }
.table { width: 100%; table-layout: fixed; border-collapse: collapse; margin-bottom: 28px; }
.table th, .table td { padding: 11px; border-top: 1px solid #ddd; text-align: left; line-height: 27px; }
.c-address { width: 45.5%; }
.c-lat { width: 10.9%; }
.c-long { width: 13%; }
.c-body { width: 13.6%; }
hr { margin: 0 0 27px; border: 0; border-top: 1px solid #eee; }
.webcam { position: fixed; right: 0; bottom: 0; width: 22px; height: 35px; }
```
